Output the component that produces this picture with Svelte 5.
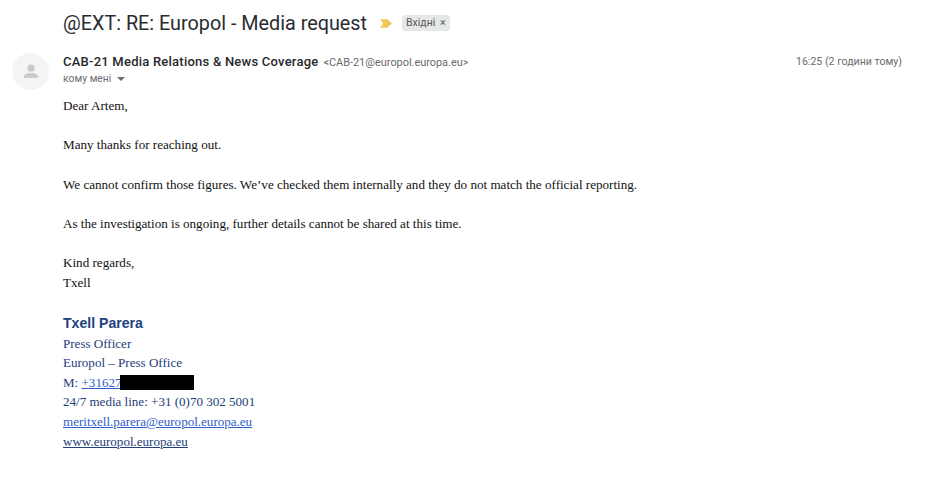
<script>
  const paragraphs = [
    'Many thanks for reaching out.',
    'We cannot confirm those figures. We’ve checked them internally and they do not match the official reporting.',
    'As the investigation is ongoing, further details cannot be shared at this time.'
  ]
</script>

<div class="mail">
  <header class="subject">
    <h1>@EXT: RE: Europol - Media request</h1>
    <svg class="marker" width="12" height="9" viewBox="0 0 13 9"><path d="M0 0h8l5 4.5L8 9H0l3.5-4.5z" fill="#f3c65c" /></svg>
    <span class="label">Вхідні <i>×</i></span>
  </header>

  <div class="msg">
    <div class="avatar">
      <svg width="20" height="20" viewBox="0 0 20 20" fill="#c8cacc">
        <circle cx="10" cy="6.2" r="3.6" />
        <path d="M3 16v-1.4C3 12 7.4 11 10 11s7 1 7 3.6V16z" />
      </svg>
    </div>
    <div class="content">
      <div class="from">
        <div class="who">
          <b>CAB-21 Media Relations &amp; News Coverage</b>
          <span class="addr">&lt;CAB-21@europol.europa.eu&gt;</span>
        </div>
        <span class="time">16:25 (2 години тому)</span>
      </div>
      <div class="to">кому мені <span class="caret"></span></div>

      <div class="body">
        <p>Dear Artem,</p>
        {#each paragraphs as text}
          <p>{text}</p>
        {/each}
        <p>Kind regards,<br />Txell</p>
      </div>

      <div class="sig">
        <div class="name">Txell Parera</div>
        <div>Press Officer</div>
        <div>Europol – Press Office</div>
        <div>M: <a class="bright" href="#tel">+31627</a><span class="redact"></span></div>
        <div>24/7 media line: +31 (0)70 302 5001</div>
        <div><a class="bright" href="#mail">meritxell.parera@europol.europa.eu</a></div>
        <div><a href="#web">www.europol.europa.eu</a></div>
      </div>
    </div>
  </div>
</div>

<style>
  :global(body) {
    background: #fff;
    font-family: Roboto, 'Liberation Sans', sans-serif;
    overflow: hidden;
  }
  .mail {
    padding: 11px 44px 0 12px;
  }
  .subject {
    display: flex;
    align-items: center;
    padding-left: 51px;
    height: 24px;
  }
  h1 {
    margin: 0;
    font-size: 19.8px;
    font-weight: 400;
    color: #2a2c30;
    white-space: nowrap;
  }
  .marker {
    margin-left: 13px;
  }
  .label {
    margin-left: 10px;
    background: #e6e7e7;
    border-radius: 3px;
    padding: 1px 5px 2px 4px;
    font-size: 10.5px;
    line-height: 13px;
    color: #55585c;
  }
  .label i {
    font-style: normal;
    margin-left: 2px;
  }
  .msg {
    display: flex;
    gap: 14px;
    margin-top: 18px;
  }
  .avatar {
    width: 37px;
    height: 37px;
    border-radius: 50%;
    background: #f3f4f4;
    display: flex;
    align-items: center;
    justify-content: center;
    flex: none;
  }
  .content {
    flex: 1;
  }
  .from {
    display: flex;
    justify-content: space-between;
    align-items: center;
    height: 17px;
  }
  .who {
    display: flex;
    align-items: baseline;
    gap: 5px;
  }
  .from b {
    font-size: 13px;
    font-weight: 500;
    letter-spacing: 0.23px;
    color: #26282c;
  }
  .addr {
    font-size: 10.9px;
    color: #666a6e;
  }
  .time {
    font-size: 10.6px;
    color: #6a6d71;
  }
  .to {
    font-size: 10.4px;
    color: #6a6d71;
    margin-top: 2px;
    display: flex;
    align-items: center;
    gap: 5px;
  }
  .caret {
    border: 4px solid transparent;
    border-top: 4px solid #6a6d71;
    border-bottom: 0;
    margin-left: 1px;
  }
  .body {
    margin-top: 11px;
    font-family: 'Liberation Serif', serif;
    font-size: 13.1px;
    line-height: 19.65px;
    color: #111;
  }
  .body p {
    margin: 0 0 19.65px;
  }
  .body p:last-child {
    margin-bottom: 0;
  }
  .sig {
    margin-top: 21.6px;
    font-family: 'Liberation Serif', serif;
    font-size: 13.05px;
    line-height: 19.6px;
    color: #24407a;
  }
  .name {
    font-family: 'Liberation Sans', sans-serif;
    font-size: 14.1px;
    font-weight: 700;
    color: #214080;
  }
  a {
    color: #24407a;
  }
  .bright {
    color: #2f60c8;
  }
  .redact {
    display: inline-block;
    width: 74px;
    height: 15px;
    background: #000;
    vertical-align: -3px;
    margin-left: -1px;
  }
</style>
